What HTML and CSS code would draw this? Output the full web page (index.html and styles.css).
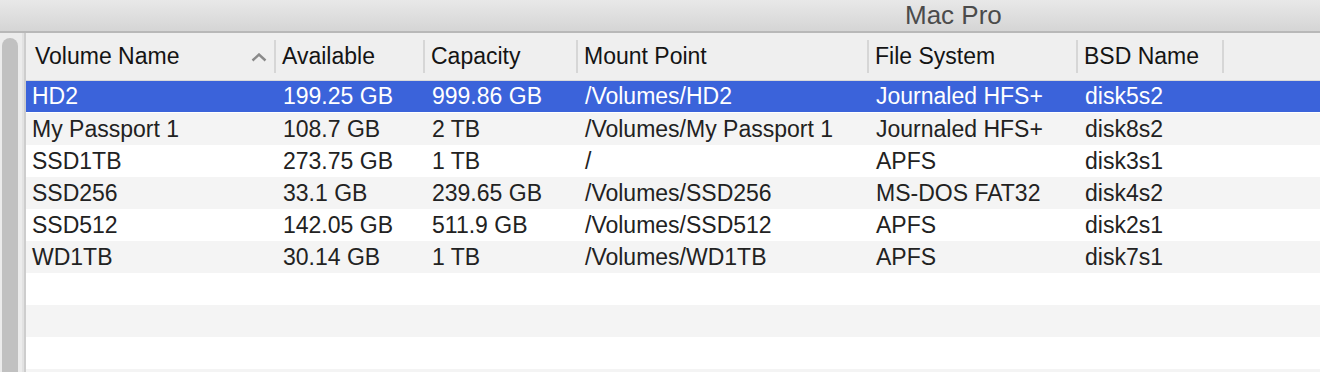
FILE: index.html
```html
<!DOCTYPE html>
<html lang="en">

<head>
  <meta charset="UTF-8">
  <meta name="viewport" content="width=device-width, initial-scale=1.0">
  <title>Mac Pro</title>
  <link rel="stylesheet" href="styles.css">
</head>

<body>
  <div class="window">
    <div class="titlebar">Mac Pro</div>

    <div class="content">
      <!-- Left scroller -->
      <div class="gutter">
        <div class="thumb"></div>
      </div>

      <!-- Volume table -->
      <div class="volumes">
        <div class="row head">
          <div class="cell first">
            <span>Volume Name</span>
            <svg class="sort" width="16" height="9" viewBox="0 0 16 9">
              <polyline points="1.5,7.5 8,1.5 14.5,7.5" fill="none" stroke="#8a8a8a" stroke-width="2.4" />
            </svg>
          </div>
          <div class="cell">Available</div>
          <div class="cell">Capacity</div>
          <div class="cell">Mount Point</div>
          <div class="cell">File System</div>
          <div class="cell">BSD Name</div>
          <div class="cell last"></div>
        </div>

        <div class="row selected">
          <div class="cell first">HD2</div>
          <div class="cell">199.25 GB</div>
          <div class="cell">999.86 GB</div>
          <div class="cell">/Volumes/HD2</div>
          <div class="cell">Journaled HFS+</div>
          <div class="cell">disk5s2</div>
          <div class="cell"></div>
        </div>
        <div class="row">
          <div class="cell first">My Passport 1</div>
          <div class="cell">108.7 GB</div>
          <div class="cell">2 TB</div>
          <div class="cell">/Volumes/My Passport 1</div>
          <div class="cell">Journaled HFS+</div>
          <div class="cell">disk8s2</div>
          <div class="cell"></div>
        </div>
        <div class="row">
          <div class="cell first">SSD1TB</div>
          <div class="cell">273.75 GB</div>
          <div class="cell">1 TB</div>
          <div class="cell">/</div>
          <div class="cell">APFS</div>
          <div class="cell">disk3s1</div>
          <div class="cell"></div>
        </div>
        <div class="row">
          <div class="cell first">SSD256</div>
          <div class="cell">33.1 GB</div>
          <div class="cell">239.65 GB</div>
          <div class="cell">/Volumes/SSD256</div>
          <div class="cell">MS-DOS FAT32</div>
          <div class="cell">disk4s2</div>
          <div class="cell"></div>
        </div>
        <div class="row">
          <div class="cell first">SSD512</div>
          <div class="cell">142.05 GB</div>
          <div class="cell">511.9 GB</div>
          <div class="cell">/Volumes/SSD512</div>
          <div class="cell">APFS</div>
          <div class="cell">disk2s1</div>
          <div class="cell"></div>
        </div>
        <div class="row">
          <div class="cell first">WD1TB</div>
          <div class="cell">30.14 GB</div>
          <div class="cell">1 TB</div>
          <div class="cell">/Volumes/WD1TB</div>
          <div class="cell">APFS</div>
          <div class="cell">disk7s1</div>
          <div class="cell"></div>
        </div>

        <!-- empty striped rows -->
        <div class="row"></div>
        <div class="row"></div>
        <div class="row"></div>
        <div class="row"></div>
      </div>
    </div>
  </div>
</body>

</html>
```

FILE: styles.css
```css
body {
  margin: 0;
  font-family: "Liberation Sans", Arial, sans-serif;
  background-color: #ececec;
  overflow: hidden;
}

.window {
  width: 1320px;
  height: 372px;
  display: flex;
  flex-direction: column;
  overflow: hidden;
}

.titlebar {
  height: 33px;
  box-sizing: border-box;
  padding-left: 905px;
  background: linear-gradient(#e8e8e8, #d5d5d5);
  border-bottom: 2px solid #b8b8b8;
  color: #4b4b4b;
  font-size: 26px;
  line-height: 30px;
  flex-shrink: 0;
}

.content {
  display: flex;
  flex: 1;
  min-height: 0;
}

/* Left scroller */
.gutter {
  width: 24px;
  padding: 5px 4px 0 2px;
  box-sizing: border-box;
  background-color: #ececec;
  border-right: 2px solid #e2e2e2;
  flex-shrink: 0;
}

.thumb {
  height: 400px;
  background-color: #c1c1c1;
  border-radius: 8px;
}

/* Table */
.volumes {
  flex: 1;
  border-left: 2px solid #cdcdcd;
  background-color: #fff;
  display: flex;
  flex-direction: column;
}

.row {
  display: grid;
  grid-template-columns: 250px 149px 153px 291px 209px 146px 1fr;
  height: 32px;
  flex-shrink: 0;
  align-items: center;
  font-size: 23px;
  color: #222;
  white-space: nowrap;
}

.row:nth-child(odd) {
  background-color: #f4f4f4;
}

.row.head {
  height: 47px;
  background-color: #efefef;
  border-bottom: 1px solid #d9d9d9;
  color: #141414;
  align-items: stretch;
}

.head .cell {
  display: flex;
  align-items: center;
  padding-left: 6px;
  background: linear-gradient(#d6d6d6, #d6d6d6) right center / 2px 33px no-repeat;
}

.head .cell.first {
  padding-left: 9px;
  justify-content: space-between;
  padding-right: 9px;
}

.head .cell.last {
  background: none;
}

.sort {
  margin-top: 1px;
}

.cell {
  padding-left: 7px;
  overflow: hidden;
}

.cell.first {
  padding-left: 6px;
}

.row.selected {
  background-color: #3b63da;
  color: #fff;
  border-bottom: 1px solid #fff;
  box-sizing: border-box;
}
```
